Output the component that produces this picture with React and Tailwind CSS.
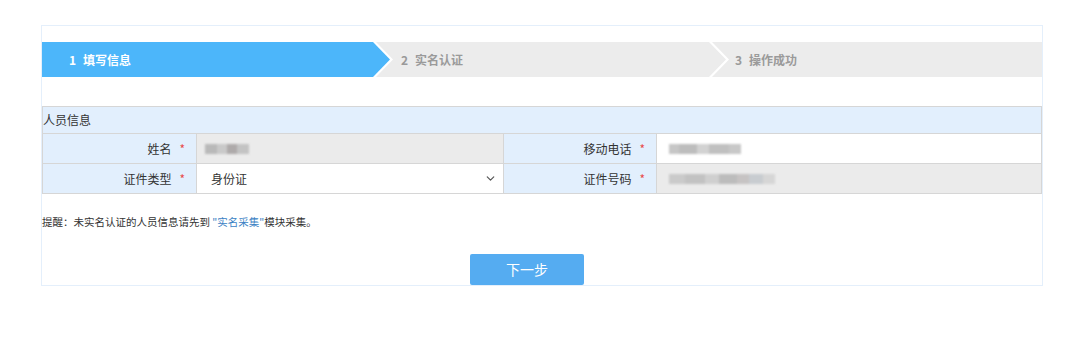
import { ChevronDown } from "lucide-react";

const Blur = ({ blocks }) => (
  <div className="flex items-center blur-[1px]">
    {blocks.map(([w, c], i) => (
      <span key={i} className="h-[10px]" style={{ width: w, background: c }} />
    ))}
  </div>
);

const Label = ({ text }) => (
  <td className="w-[154px] border border-[#d6d6d6] bg-[#e2effd] pr-[11px] text-right text-[12px] text-[#333]">
    {text}
    <span className="ml-[8px] text-[#e84a4a]">*</span>
  </td>
);

const App = () => {
  return (
    <div
      className="h-[353px] w-[1080px] bg-white pt-[25px]"
      style={{ fontFamily: '"Noto Sans CJK SC", "Noto Sans", sans-serif' }}
    >
      <div className="ml-[41px] flex h-[261px] w-[1002px] flex-col border border-[#e4effb]">
        {/* Steps */}
        <div className="mt-[16px] flex h-[35px] shrink-0">
          <div className="flex w-[348px] shrink-0 items-center bg-[#4cb6fa] pl-[27px] text-[12px] font-bold text-white [clip-path:polygon(0_0,331px_0,348px_50%,331px_100%,0_100%)]">
            <span>1</span>
            <span className="ml-[7px]">填写信息</span>
          </div>
          <div className="-ml-[14px] flex w-[350px] shrink-0 items-center bg-[#ececec] pl-[25px] text-[12px] font-bold text-[#9a9a9a] [clip-path:polygon(0_0,333px_0,350px_50%,333px_100%,0_100%,17px_50%)]">
            <span>2</span>
            <span className="ml-[7px]">实名认证</span>
          </div>
          <div className="-ml-[14px] flex flex-1 items-center bg-[#ececec] pl-[23px] text-[12px] font-bold text-[#9a9a9a] [clip-path:polygon(0_0,100%_0,100%_100%,0_100%,17px_50%)]">
            <span>3</span>
            <span className="ml-[7px]">操作成功</span>
          </div>
        </div>

        {/* Person info table */}
        <table className="mt-[29px] w-[1000px] shrink-0 table-fixed border-collapse">
          <colgroup>
            <col className="w-[154px]" />
            <col className="w-[307px]" />
            <col className="w-[153px]" />
            <col />
          </colgroup>
          <tbody>
            <tr className="h-[27px]">
              <td colSpan={4} className="border border-[#d6d6d6] bg-[#e2effd] text-[12px] text-[#333]">
                人员信息
              </td>
            </tr>
            <tr className="h-[30px]">
              <Label text="姓名" />
              <td className="border border-[#d6d6d6] bg-[#ebebeb] pl-[8px]">
                <Blur blocks={[[12, "#b9b9b9"], [10, "#c9c9c9"], [10, "#aeaaaa"], [12, "#c3c3c3"]]} />
              </td>
              <Label text="移动电话" />
              <td className="border border-[#d6d6d6] bg-white pl-[12px]">
                <Blur blocks={[[10, "#c6c6c6"], [18, "#bdbdbd"], [12, "#d2d2d2"], [20, "#c0c0c0"], [12, "#c8c8c8"]]} />
              </td>
            </tr>
            <tr className="h-[30px]">
              <Label text="证件类型" />
              <td className="border border-[#d6d6d6] bg-white">
                <div className="flex items-center justify-between pl-[14px] pr-[6px] text-[12px] text-[#333]">
                  <span>身份证</span>
                  <ChevronDown size={13} strokeWidth={2.2} className="text-[#555]" />
                </div>
              </td>
              <Label text="证件号码" />
              <td className="border border-[#d6d6d6] bg-[#ebebeb] pl-[12px]">
                <Blur
                  blocks={[
                    [16, "#cacaca"],
                    [20, "#c2c2c2"],
                    [14, "#cfcfcf"],
                    [18, "#bcbcbc"],
                    [12, "#c6c3c3"],
                    [14, "#c8ccd0"],
                    [12, "#d6d6d6"],
                  ]}
                />
              </td>
            </tr>
          </tbody>
        </table>

        {/* Reminder */}
        <p className="mt-[20px] text-[10.5px] leading-[16px] text-[#333]">
          提醒：未实名认证的人员信息请先到 <span className="text-[#3b82c4]">"实名采集"</span>模块采集。
        </p>

        {/* Next */}
        <div className="mt-[24px] pl-[428px]">
          <button className="h-[31px] w-[114px] rounded-[2px] bg-[#55acf1] text-[14px] text-white">下一步</button>
        </div>
      </div>
    </div>
  );
};

export default App;
